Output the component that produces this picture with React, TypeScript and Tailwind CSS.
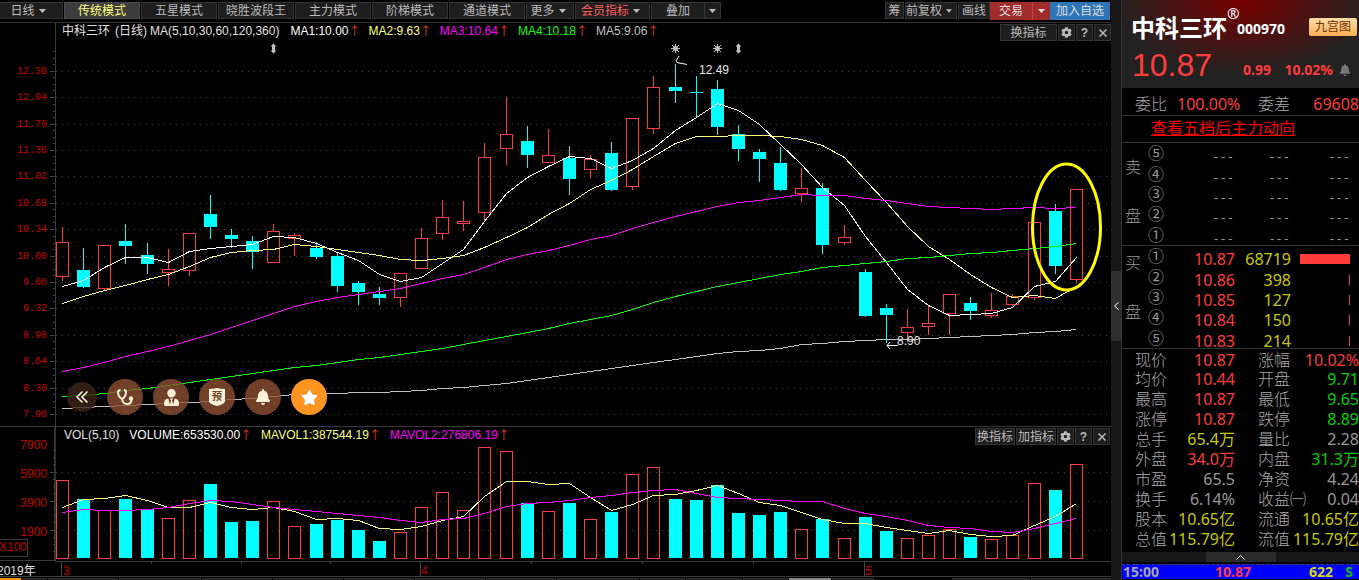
import { useState } from "react";
import { FaBell, FaCog, FaStar, FaUserTie } from "react-icons/fa";

type Candle = {
  high: number;
  top: number;
  bottom: number;
  low: number;
  up: boolean;
  volume: number;
};

const c = (high: number, top: number, bottom: number, low: number, up: number, volume: number): Candle => ({
  high,
  top,
  bottom,
  low,
  up: up === 1,
  volume,
});

// high, body top, body bottom, low, rising, top of the volume bar
const candles: Candle[] = [
  c(227, 242, 277, 281, 1, 480),
  c(248, 270, 287, 288, 0, 499),
  c(245, 245, 289, 290, 1, 510),
  c(224, 241, 246, 264, 0, 499),
  c(243, 255, 264, 274, 0, 509),
  c(249, 269, 273, 286, 1, 518),
  c(233, 233, 271, 276, 1, 500),
  c(195, 214, 227, 239, 0, 484),
  c(229, 235, 239, 248, 0, 522),
  c(236, 241, 252, 269, 0, 521),
  c(224, 231, 263, 263, 1, 501),
  c(233, 235, 239, 256, 1, 526),
  c(242, 248, 257, 259, 0, 524),
  c(253, 256, 286, 292, 0, 520),
  c(281, 283, 292, 305, 0, 530),
  c(287, 294, 298, 305, 0, 541),
  c(273, 273, 298, 307, 1, 532),
  c(228, 238, 269, 269, 1, 507),
  c(200, 217, 234, 240, 1, 492),
  c(201, 221, 224, 231, 1, 510),
  c(143, 157, 213, 221, 1, 447),
  c(97, 134, 149, 165, 1, 451),
  c(126, 141, 155, 168, 0, 503),
  c(129, 155, 163, 163, 1, 511),
  c(146, 158, 179, 195, 0, 503),
  c(155, 159, 170, 178, 1, 519),
  c(142, 153, 190, 191, 0, 512),
  c(118, 118, 187, 190, 1, 474),
  c(76, 87, 129, 134, 1, 467),
  c(64, 87, 91, 103, 0, 499),
  c(76, 92, 93, 118, 0, 500),
  c(80, 89, 127, 135, 0, 485),
  c(125, 134, 149, 161, 0, 513),
  c(149, 152, 159, 182, 0, 515),
  c(147, 163, 190, 191, 0, 512),
  c(168, 188, 194, 202, 1, 529),
  c(183, 188, 245, 254, 0, 519),
  c(225, 237, 243, 245, 1, 538),
  c(269, 272, 316, 317, 0, 517),
  c(304, 308, 315, 343, 0, 531),
  c(309, 327, 333, 342, 1, 538),
  c(306, 323, 327, 335, 1, 535),
  c(294, 294, 314, 335, 1, 529),
  c(297, 303, 311, 320, 0, 537),
  c(293, 310, 316, 318, 1, 539),
  c(294, 296, 305, 306, 1, 535),
  c(222, 222, 298, 300, 1, 483),
  c(204, 211, 266, 274, 0, 490),
  c(189, 189, 280, 283, 1, 464),
];

const priceLines = [
  {
    color: "#ffffff",
    values: [286, 280, 267, 257, 257, 262, 251, 248, 246, 244, 236, 237, 243, 252, 260, 274, 281, 277, 263, 249, 221, 193, 177, 166, 156, 158, 168, 160, 148, 130, 117, 103, 110, 124, 144, 164, 187, 205, 236, 262, 289, 305, 315, 314, 313, 307, 286, 281, 257],
  },
  {
    color: "#ffff80",
    values: [303, 296, 290, 285, 279, 274, 266, 257, 252, 250, 249, 244, 246, 249, 252, 255, 259, 260, 258, 255, 247, 237, 227, 214, 203, 189, 180, 169, 156, 143, 136, 136, 135, 135, 136, 139, 145, 157, 180, 202, 226, 246, 259, 274, 287, 297, 295, 298, 286],
  },
  {
    color: "#ff00ff",
    values: [371, 367, 362, 356, 351, 346, 340, 334, 327, 320, 313, 306, 301, 297, 294, 291, 288, 283, 278, 274, 267, 259, 254, 250, 245, 239, 235, 228, 222, 216, 211, 206, 202, 200, 197, 194, 195, 195, 198, 200, 203, 206, 207, 208, 209, 208, 207, 208, 207],
  },
  {
    color: "#00ff00",
    values: [396, 395, 393, 390, 388, 385, 382, 379, 376, 373, 370, 367, 365, 362, 359, 357, 354, 351, 348, 344, 340, 336, 332, 328, 323, 319, 315, 309, 302, 296, 291, 286, 282, 278, 274, 271, 267, 265, 263, 261, 258, 257, 255, 253, 252, 250, 248, 246, 243],
  },
  {
    color: "#c0c0c0",
    values: [408, 407, 406, 405, 404, 403, 402, 401, 399, 398, 396, 394, 393, 393, 392, 392, 391, 390, 388, 387, 385, 383, 380, 377, 374, 371, 368, 365, 362, 359, 356, 353, 351, 350, 348, 344, 343, 341, 340, 339, 339, 338, 337, 336, 335, 334, 332, 331, 329],
  },
];

const volumeLines = [
  {
    color: "#ffff80",
    values: [507, 499, 498, 495, 500, 507, 507, 502, 507, 509, 507, 511, 519, 518, 520, 528, 529, 526, 520, 516, 496, 481, 481, 484, 483, 497, 510, 504, 495, 494, 490, 485, 493, 502, 505, 512, 519, 523, 523, 527, 530, 533, 530, 534, 536, 535, 525, 516, 503],
  },
  {
    color: "#ff00ff",
    values: [512, 509, 510, 510, 509, 507, 503, 500, 501, 504, 507, 509, 511, 513, 515, 517, 520, 522, 519, 518, 513, 506, 503, 502, 500, 497, 495, 492, 490, 489, 493, 497, 498, 499, 500, 501, 501, 508, 513, 516, 520, 525, 527, 528, 531, 532, 528, 523, 518],
  },
];

const priceTicks = [
  { y: 71, label: "12.38" },
  { y: 97, label: "12.04" },
  { y: 124, label: "11.70" },
  { y: 150, label: "11.36" },
  { y: 176, label: "11.02" },
  { y: 203, label: "10.68" },
  { y: 229, label: "10.34" },
  { y: 256, label: "10.00" },
  { y: 282, label: "9.66" },
  { y: 308, label: "9.32" },
  { y: 335, label: "8.98" },
  { y: 361, label: "8.64" },
  { y: 388, label: "8.30" },
  { y: 414, label: "7.96" },
];

const volumeTicks = [
  { y: 443, label: "7900" },
  { y: 472, label: "5900" },
  { y: 501, label: "3900" },
  { y: 530, label: "1900" },
];

const candleX = (i: number) => Math.floor(62.58 + i * 21.12);

const linePoints = (values: number[]) =>
  values.map((y, i) => `${candleX(i) + 0.5},${y + 0.5}`).join(" ");

const modes = ["传统模式", "五星模式", "晓胜波段王", "主力模式", "阶梯模式", "通道模式"];

const toolButton =
  "flex h-[17px] items-center justify-center border border-[#333] bg-[#1e1e1e] whitespace-nowrap text-[#bbb]";

function Caret() {
  return (
    <svg width="7" height="4" viewBox="0 0 7 4" fill="currentColor" aria-hidden="true">
      <path d="M0 0h7L3.5 4z" />
    </svg>
  );
}

function Toolbar() {
  const [mode, setMode] = useState("传统模式");

  return (
    <div className="flex h-[23px] justify-between border-b border-[#333] pt-[2px] pr-px">
      <div className="flex gap-px">
        <button className={`${toolButton} w-[63px] gap-1 border-l-0 pr-[6px]`}>
          日线
          <Caret />
        </button>
        {modes.map((name) => (
          <button
            key={name}
            onClick={() => setMode(name)}
            className={
              name === mode
                ? "flex h-[17px] w-[76px] items-center justify-center border border-[#4a4a4a] bg-[#3c3c3c] whitespace-nowrap text-[#ffff80]"
                : `${toolButton} w-[76px]`
            }
          >
            {name}
          </button>
        ))}
        <button className={`${toolButton} w-[48px] gap-1 pr-1`}>
          更多
          <Caret />
        </button>
        <button className={`${toolButton} w-[75px] gap-1 pr-1`}>
          <span className="text-[#ff6060]">会员指标</span>
          <Caret />
        </button>
        <div className="flex">
          <button className={`${toolButton} w-[54px]`}>叠加</button>
          <button className={`${toolButton} w-[16px] border-l-0`} aria-label="叠加选项">
            <Caret />
          </button>
        </div>
      </div>
      <div className="flex">
        <div className="flex gap-px">
          <button className={`${toolButton} w-[19px]`}>筹</button>
          <button className={`${toolButton} w-[52px] gap-1 pr-1`}>
            前复权
            <Caret />
          </button>
          <button className={`${toolButton} w-[32px]`}>画线</button>
        </div>
        <button className="flex h-[18px] w-[42px] items-center justify-center bg-[#a02c2c] text-[#ddd]">
          交易
        </button>
        <button
          className="flex h-[18px] w-[18px] items-center justify-center border-l border-[#d04040] bg-[#a02c2c] text-[#ddd]"
          aria-label="交易选项"
        >
          <Caret />
        </button>
        <button className="flex h-[18px] w-[60px] items-center justify-center bg-[#2e75b6] whitespace-nowrap text-[#ddd]">
          加入自选
        </button>
      </div>
    </div>
  );
}

function PaneButtons({ names, wide }: { names: string[]; wide?: boolean }) {
  return (
    <div className="ml-auto flex gap-px pt-px">
      {names.map((name) => (
        <button key={name} className={`${toolButton} ${wide ? "w-[57px]" : "w-[40px]"}`}>
          {name}
        </button>
      ))}
      <button className={`${toolButton} w-[17px]`} aria-label="设置">
        <FaCog size={11} />
      </button>
      <button className={`${toolButton} w-[17px] font-bold`}>?</button>
      <button className={`${toolButton} w-[17px]`} aria-label="关闭">
        <svg width="8" height="8" viewBox="0 0 8 8" stroke="currentColor" strokeWidth="1.5" aria-hidden="true">
          <path d="M0.5 0.5l7 7M7.5 0.5l-7 7" />
        </svg>
      </button>
    </div>
  );
}

function Legend({ text, className }: { text: string; className: string }) {
  return (
    <span className={`flex ${className}`}>
      {text}
      <span className="w-3 text-center font-['Noto_Sans_CJK_SC'] text-[#e03a2a]">↑</span>
    </span>
  );
}

function Sun({ x }: { x: number }) {
  return (
    <g stroke="#c0c0c0" fill="#c0c0c0">
      <circle cx={x + 0.5} cy="48.5" r="2" />
      <path d={`M${x + 0.5} 44v9M${x - 4} 48.5h9M${x - 3} 45l7 7M${x + 4} 45l-7 7`} />
    </g>
  );
}

function UpDown({ x }: { x: number }) {
  return <path fill="#c0c0c0" d={`M${x + 0.5} 43.5l3 3h-1.5v4h1.5l-3 3l-3-3h1.5v-4h-1.5z`} />;
}

function GridRow({ y }: { y: number }) {
  return (
    <>
      <path d={`M50 ${y + 0.5}h5`} stroke="#444" />
      <path d={`M56 ${y + 0.5}H1108`} stroke="#444" strokeDasharray="1 5" />
    </>
  );
}

function PriceChart() {
  return (
    <svg
      viewBox="0 43 1111 383"
      preserveAspectRatio="xMinYMin meet"
      className="block h-[383px] w-full"
      fontFamily="'Liberation Sans', Arial, sans-serif"
      role="img"
      aria-label="日线 K 线图"
    >
      <g shapeRendering="crispEdges">
        <path d="M55.5 43V426" stroke="#3a3a3a" />
        {priceTicks.map((tick) => (
          <g key={tick.label}>
            <GridRow y={tick.y} />
            <path
              d={`M53 ${tick.y - 19.5}h2M53 ${tick.y - 12.5}h2M53 ${tick.y - 6.5}h2`}
              stroke="#444"
            />
          </g>
        ))}
      </g>
      {priceTicks.map((tick) => (
        <text
          key={tick.label}
          x="47"
          y={tick.y + 3}
          textAnchor="end"
          fontSize="10"
          fontFamily="'Liberation Mono', monospace"
          fill="#c80000"
        >
          {tick.label}
        </text>
      ))}

      <g shapeRendering="crispEdges">
        {candles.map((k, i) => {
          const x = candleX(i);
          if (k.up) {
            return (
              <g key={i} stroke="#ff3c3c" fill="none">
                <path d={`M${x + 0.5} ${k.high}V${k.top}M${x + 0.5} ${k.bottom}V${k.low}`} />
                <rect x={x - 5.5} y={k.top + 0.5} width="12" height={k.bottom - k.top - 1} />
              </g>
            );
          }
          return (
            <g key={i} fill="#00ffff">
              <rect x={x} y={k.high} width="1" height={k.low - k.high} />
              <rect x={x - 6} y={k.top} width="13" height={k.bottom - k.top} />
            </g>
          );
        })}
        {priceLines.map((line) => (
          <polyline key={line.color} points={linePoints(line.values)} fill="none" stroke={line.color} />
        ))}
      </g>

      <UpDown x={273} />
      <Sun x={675} />
      <Sun x={717} />
      <UpDown x={738} />

      <path d="M679 56l-3 5l1 1.500l10 2" fill="none" stroke="#fff" />
      <text x="699" y="74" fontSize="12" fill="#e8e8e8">
        12.49
      </text>
      <path d="M898 345.500h-11M890 342l-3 3.500l3 3.500" fill="none" stroke="#fff" />
      <text x="897" y="345" fontSize="12" fill="#e8e8e8">
        8.90
      </text>

      <ellipse cx="1066.500" cy="227" rx="34" ry="63" fill="none" stroke="#ffff00" strokeWidth="3" />
    </svg>
  );
}

function VolumeChart() {
  return (
    <svg
      viewBox="0 446 1111 131"
      preserveAspectRatio="xMinYMin meet"
      className="block h-[131px] w-full overflow-visible"
      fontFamily="'Liberation Sans', Arial, 'Noto Sans CJK SC', sans-serif"
      fontSize="12"
      role="img"
      aria-label="成交量图"
    >
      <g shapeRendering="crispEdges">
        <path d="M55 446V561" stroke="#333" strokeWidth="2" />
        <path d="M0 560.500H55M55 561.500H1111M0 576.500H1111" stroke="#3a3a3a" />
        {volumeTicks.slice(1).map((tick) => (
          <GridRow key={tick.label} y={tick.y} />
        ))}
        {volumeTicks.map((tick) => (
          <path
            key={tick.label}
            d={`M53 ${tick.y + 7.5}h2M53 ${tick.y + 14.5}h2M53 ${tick.y + 21.5}h2`}
            stroke="#444"
          />
        ))}
        <rect x="-1.500" y="539.500" width="29" height="17" fill="none" stroke="#3a3a3a" />
        <path d="M61.500 561V577M420.500 561V577M864.500 561V577" stroke="#444" />
        <path d="M151.500 561v3M241.500 561v3M330.500 561v3M531.500 561v3M642.500 561v3M753.500 561v3" stroke="#444" />
      </g>
      <g fill="#c00000">
        {volumeTicks.map((tick) => (
          <text key={tick.label} x="47" y={tick.y + 6} textAnchor="end">
            {tick.label}
          </text>
        ))}
        <text x="-1" y="551">X100</text>
        <text x="63" y="575">3</text>
        <text x="421" y="575">4</text>
        <text x="865" y="575">5</text>
      </g>
      <text x="-3" y="575" fill="#e0e0e0">
        2019年
      </text>

      <g shapeRendering="crispEdges">
        {candles.map((k, i) =>
          k.up ? (
            <rect
              key={i}
              x={candleX(i) - 5.5}
              y={k.volume + 0.5}
              width="12"
              height={558 - k.volume}
              fill="none"
              stroke="#ff3c3c"
            />
          ) : (
            <rect key={i} x={candleX(i) - 6} y={k.volume} width="13" height={558 - k.volume} fill="#00ffff" />
          )
        )}
        {volumeLines.map((line) => (
          <polyline key={line.color} points={linePoints(line.values)} fill="none" stroke={line.color} />
        ))}
      </g>
    </svg>
  );
}

const roundButton =
  "flex size-9 items-center justify-center rounded-full bg-[#8c5032]/80 text-[#fff0d8]";

function FloatingActions() {
  return (
    <div className="absolute bottom-[11px] left-[67px] flex items-center gap-[10px]">
      <button
        className="flex size-[30px] items-center justify-center rounded-full bg-[#3c2418]/80 text-[#fff0d8]"
        aria-label="收起"
      >
        <svg width="14" height="14" viewBox="0 0 14 14" fill="none" stroke="currentColor" strokeWidth="1.6" aria-hidden="true">
          <path d="M7.500 1.500L2 7l5.500 5.500M12.500 1.500L7 7l5.500 5.500" />
        </svg>
      </button>
      <button className={roundButton} aria-label="诊股">
        <svg width="18" height="18" viewBox="0 0 18 18" fill="none" stroke="currentColor" strokeWidth="2" aria-hidden="true">
          <path d="M4.500 2Q2 2 2 4.500Q2 8 4.500 10Q6 11 7.500 10Q10 8 10 4.500Q10 2 8 2" />
          <path d="M6 10.500Q6.500 16 11 16Q15.500 16 15.500 11.500" />
          <circle cx="15" cy="10.500" r="1.200" />
        </svg>
      </button>
      <button className={roundButton} aria-label="投顾">
        <FaUserTie size={17} />
      </button>
      <button className={`${roundButton} relative`} aria-label="预警">
        <svg width="18" height="20" viewBox="0 0 18 20" fill="currentColor" aria-hidden="true">
          <path d="M1 2q4 0 8-1q4 1 8 1v12q0 3-8 5q-8-2-8-5z" />
        </svg>
        <span className="absolute inset-0 flex items-center justify-center text-[10px] font-bold text-[#6f4128]">
          预
        </span>
      </button>
      <button className={roundButton} aria-label="提醒">
        <FaBell size={16} />
      </button>
      <button
        className="flex size-9 items-center justify-center rounded-full bg-[#ff9420] text-white"
        aria-label="收藏"
      >
        <FaStar size={17} />
      </button>
    </div>
  );
}

function ChartArea() {
  return (
    <main className="flex min-w-0 flex-1 flex-col text-[12px] leading-4">
      <Toolbar />
      <section className="relative">
        <div className="flex h-5 pl-[55px]">
          <div className="flex flex-1 border-l border-[#3a3a3a] whitespace-nowrap text-[#e0e0e0]">
            <h1 className="ml-[6px]">中科三环</h1>
            <span className="ml-[5px]">(日线)</span>
            <span className="mr-[11px] ml-[3px]">MA(5,10,30,60,120,360)</span>
            <div className="flex gap-2">
              <Legend text="MA1:10.00" className="text-white" />
              <Legend text="MA2:9.63" className="text-[#ffff80]" />
              <Legend text="MA3:10.64" className="text-[#ff00ff]" />
              <Legend text="MA4:10.18" className="text-[#00ff00]" />
              <Legend text="MA5:9.06" className="text-[#c0c0c0]" />
            </div>
            <PaneButtons names={["换指标"]} wide />
          </div>
        </div>
        <PriceChart />
        <FloatingActions />
      </section>
      <section className="border-t border-[#3a3a3a]">
        <div className="flex h-[19px] pl-[54px]">
          <div className="flex flex-1 border-l-2 border-[#333] pr-px whitespace-nowrap text-[#e0e0e0]">
            <h2 className="mr-[10px] ml-2">VOL(5,10)</h2>
            <div className="flex gap-[9px]">
              <Legend text="VOLUME:653530.00" className="text-white" />
              <Legend text="MAVOL1:387544.19" className="text-[#ffff80]" />
              <Legend text="MAVOL2:276806.19" className="text-[#ff00ff]" />
            </div>
            <PaneButtons names={["换指标", "加指标"]} />
          </div>
        </div>
        <VolumeChart />
      </section>
      <div className="mt-px flex h-[2px] gap-px">
        <div className="w-[21px] bg-[#ff9000]" />
        <div className="w-[25px] bg-[#2a2a2a]" />
        <div className="w-[70px] bg-[#2a2a2a]" />
        <div className="w-[82px] bg-[#2a2a2a]" />
        <div className="w-[70px] bg-[#2a2a2a]" />
        <div className="w-[70px] bg-[#2a2a2a]" />
        <div className="w-[70px] bg-[#2a2a2a]" />
        <div className="w-[70px] bg-[#2a2a2a]" />
        <div className="w-[70px] bg-[#2a2a2a]" />
        <div className="w-[82px] bg-[#2a2a2a]" />
        <div className="w-[45px] bg-[#2a2a2a]" />
        <div className="w-[56px] bg-[#2a2a2a]" />
        <div className="w-[45px] bg-[#2a2a2a]" />
        <div className="w-[42px] bg-[#888]" />
        <div className="w-[42px] bg-[#2a2a2a]" />
        <div className="w-[76px]" />
        <div className="w-[78px] bg-[#2a2a2a]" />
        <div className="flex-1 bg-[#2a2a2a]" />
      </div>
    </main>
  );
}

const bids = [
  { level: "①", price: "10.87", volume: 68719, bar: 50 },
  { level: "②", price: "10.86", volume: 398, bar: 1 },
  { level: "③", price: "10.85", volume: 127, bar: 1 },
  { level: "④", price: "10.84", volume: 150, bar: 1 },
  { level: "⑤", price: "10.83", volume: 214, bar: 1 },
];

const RED = "text-[#ff3c3c]";
const GREEN = "text-[#00d000]";
const YELLOW = "text-[#c8c800]";
const GRAY = "text-[#999]";

const stats = [
  ["现价", "10.87", RED, "涨幅", "10.02%", RED],
  ["均价", "10.44", RED, "开盘", "9.71", GREEN],
  ["最高", "10.87", RED, "最低", "9.65", GREEN],
  ["涨停", "10.87", RED, "跌停", "8.89", GREEN],
  ["总手", "65.4万", YELLOW, "量比", "2.28", GRAY],
  ["外盘", "34.0万", RED, "内盘", "31.3万", GREEN],
  ["市盈", "65.5", GRAY, "净资", "4.24", GRAY],
  ["换手", "6.14%", GRAY, "收益㈠", "0.04", GRAY],
  ["股本", "10.65亿", YELLOW, "流通", "10.65亿", YELLOW],
  ["总值", "115.79亿", YELLOW, "流值", "115.79亿", YELLOW],
];

function SideLabel({ first, second, className }: { first: string; second: string; className: string }) {
  return (
    <th rowSpan={5} scope="rowgroup" className="p-0 align-top font-light">
      <div className={`flex flex-col gap-[29px] pl-[3px] text-left ${className}`}>
        <span>{first}</span>
        <span>{second}</span>
      </div>
    </th>
  );
}

function BookColumns() {
  return (
    <colgroup>
      <col className="w-[20px]" />
      <col className="w-[28px]" />
      <col className="w-[65px]" />
      <col className="w-[56px]" />
      <col />
    </colgroup>
  );
}

function OrderBook() {
  return (
    <>
      <table className="h-[103px] w-full table-fixed border-b border-[#333] text-[#999]">
        <BookColumns />
        <tbody>
          {["⑤", "④", "③", "②", "①"].map((level, i) => (
            <tr key={level} className="h-5 leading-5">
              {i === 0 && <SideLabel first="卖" second="盘" className="pt-[14px]" />}
              <td className="p-0 pl-[6px]">{level}</td>
              <td className="p-0 pt-[10px] pr-px text-right font-['Liberation_Mono'] text-[12px] leading-[10px]">---</td>
              <td className="p-0 pt-[10px] pr-px text-right font-['Liberation_Mono'] text-[12px] leading-[10px]">---</td>
              <td className="p-0 pt-[10px] pr-[9px] text-right font-['Liberation_Mono'] text-[12px] leading-[10px]">---</td>
            </tr>
          ))}
        </tbody>
      </table>
      <table className="h-[103px] w-full table-fixed border-b border-[#333] text-[#999]">
        <BookColumns />
        <tbody>
          {bids.map((bid, i) => (
            <tr key={bid.level} className="h-5 leading-5">
              {i === 0 && <SideLabel first="买" second="盘" className="pt-[7px]" />}
              <td className="p-0 pl-[6px]">{bid.level}</td>
              <td className="p-0 pt-[6px] text-right leading-[14px] text-[#ff3c3c]">{bid.price}</td>
              <td className="p-0 pt-[6px] text-right leading-[14px] text-[#c8c800]">{bid.volume}</td>
              <td className="p-0 pt-[6px] pr-[9px]">
                <div className="ml-auto h-[10px] bg-[#ff3c3c]" style={{ width: bid.bar }} />
              </td>
            </tr>
          ))}
        </tbody>
      </table>
    </>
  );
}

function QuotePanel() {
  return (
    <aside className="flex w-[238px] shrink-0 flex-col overflow-hidden border-l border-[#333] text-[16px] leading-5 whitespace-nowrap">
      <header className="h-[88px] bg-[#222] bg-[radial-gradient(ellipse_130px_75px_at_121px_0px,#780000,#222)]">
        <div className="flex h-[45px] pt-[13px] pl-[9px] text-white">
          <h2 className="text-[24px] leading-[30px] font-bold">中科三环</h2>
          <sup className="top-0 -mt-[7px] w-[10px] text-[15px] leading-none">®</sup>
          <span className="pt-[6px] text-[14px] leading-5 font-bold">000970</span>
          <button className="mt-[5px] mr-[2px] ml-auto h-[18px] w-[48px] rounded-xs bg-linear-to-b from-[#ffdcaa] to-[#ffb050] text-[12px] leading-[18px] text-[#6a3000]">
            九宫图
          </button>
        </div>
        <div className="flex h-10 pl-[10px] text-[14px] font-bold text-[#ff3c3c]">
          <span className="w-[111px] font-['Liberation_Sans'] text-[32px] leading-10 font-normal">10.87</span>
          <span className="pt-[15px] leading-5">0.99</span>
          <span className="ml-auto pt-[15px] leading-5">10.02%</span>
          <FaBell size={12} className="mt-[19px] mr-[8px] ml-[6px] text-[#777]" />
        </div>
      </header>

      <div className="flex h-[28px] items-center border-b border-[#333] pt-[5px] pl-[13px]">
        <span className="w-[42px] font-light text-[#aaa]">委比</span>
        <span className="w-[81px] text-[#ff3c3c]">100.00%</span>
        <span className="font-light text-[#aaa]">委差</span>
        <span className="ml-auto text-[#ff3c3c]">69608</span>
      </div>
      <div className="flex h-[27px] items-center border-b border-[#333] pb-[2px] pl-[29px]">
        <a href="#flow" className="text-[#ff0000] underline">
          查看五档后主力动向
        </a>
      </div>

      <OrderBook />

      <table className="mt-[2px] w-full table-fixed">
        <colgroup>
          <col className="w-[45px]" />
          <col className="w-[68px]" />
          <col className="w-[55px]" />
          <col />
        </colgroup>
        <tbody>
          {stats.map(([label, value, color, label2, value2, color2], i) => (
            <tr key={label} className={i === 0 ? "h-[18px] leading-[18px]" : "h-5 leading-5"}>
              <th scope="row" className="p-0 pl-[13px] text-left font-light text-[#aaa]">
                {label}
              </th>
              <td className={`p-0 text-right ${color}`}>{value}</td>
              <th scope="row" className="p-0 pl-[23px] text-left font-light text-[#aaa]">
                {label2}
              </th>
              <td className={`p-0 ${color2}`}>
                <div className="flex justify-end">{value2}</div>
              </td>
            </tr>
          ))}
        </tbody>
      </table>

      <div className="mt-[3px] flex h-[10px] shrink-0 justify-center bg-[#171717]">
        <button className="flex w-[70px] items-center justify-center bg-[#2a2a2a] text-white" aria-label="展开">
          <svg width="9" height="5" viewBox="0 0 9 5" fill="none" stroke="currentColor" aria-hidden="true">
            <path d="M0.500 4.500l4-4l4 4" />
          </svg>
        </button>
      </div>
      <div className="mt-[2px] flex h-[15px] shrink-0 items-center border-t border-dashed border-[#444] bg-[#0000ff] pl-px text-[14px] leading-[14px] font-bold">
        <span className="w-[92px] text-[#a8a8a8]">15:00</span>
        <span className="w-[60px] text-[#ff3c3c]">10.87</span>
        <span className="w-[58px] text-right text-[#d8d800]">622</span>
        <span className="ml-auto pr-[6px] text-[#00c800]">S</span>
      </div>
    </aside>
  );
}

export default function App() {
  return (
    <div className="flex h-screen min-h-[580px] overflow-hidden bg-black font-['Liberation_Sans','Noto_Sans_CJK_SC',sans-serif]">
      <ChartArea />
      <div className="flex w-[10px] shrink-0 flex-col bg-[#171717] pt-[271px]">
        <button className="flex h-[70px] items-center justify-center bg-[#2f2f2f] text-white" aria-label="收起侧栏">
          <svg width="5" height="8" viewBox="0 0 5 8" fill="none" stroke="currentColor" aria-hidden="true">
            <path d="M4.500 0.500L0.500 4l4 3.500" />
          </svg>
        </button>
      </div>
      <div className="flex shrink-0 font-['Noto_Sans','Noto_Sans_CJK_SC',sans-serif]">
        <QuotePanel />
      </div>
    </div>
  );
}
